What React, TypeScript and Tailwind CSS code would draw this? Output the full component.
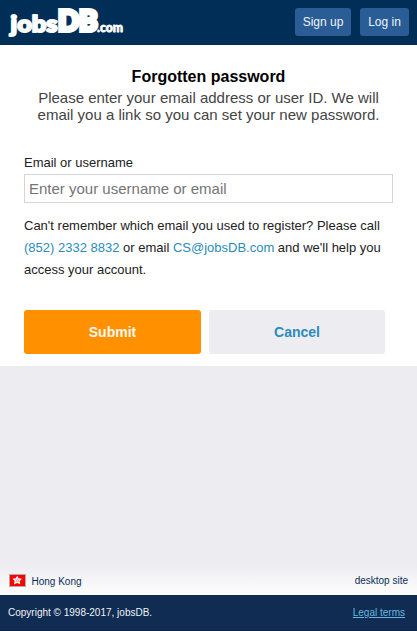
function Logo() {
  return (
    <svg width="120" height="40" viewBox="5 5 120 40" className="block overflow-visible font-[Lato,sans-serif] font-black" fill="#fff" stroke="#fff" aria-label="jobsDB.com">
      <text x="10.6" y="31.9" fontSize="23" strokeWidth="2" strokeLinejoin="round" textLength="47" lengthAdjust="spacingAndGlyphs">jobs</text>
      <text x="58" y="30.9" fontSize="27.5" strokeWidth="4" strokeLinejoin="miter" textLength="21" lengthAdjust="spacingAndGlyphs">D</text>
      <text x="79" y="30.9" fontSize="27.5" strokeWidth="4" strokeLinejoin="miter" textLength="18.5" lengthAdjust="spacingAndGlyphs">B</text>
      <text x="97" y="32.2" fontSize="13" strokeWidth="0.8" strokeLinejoin="round" textLength="26" lengthAdjust="spacingAndGlyphs">.com</text>
    </svg>
  );
}

function Flag() {
  return (
    <svg width="17" height="13" viewBox="0 0 17 13" className="block" aria-label="Hong Kong flag">
      <rect x="0.5" y="0.5" width="16" height="12" fill="#f00" stroke="#b2aaa9" />
      <path d="M8.2 1.8 9.6 4.3 12.9 4.8 10.6 7.2 11.3 10.3 8.3 8.9 5 10.3 5.6 7.1 3.5 4.8 6.8 4.3Z" fill="#fff" />
      <path d="M8.2 4.5v1.6M6.3 5.7l1.2.8M10.1 5.7l-1.2.8M7 8l.6-1M9.3 8l-.6-1" stroke="#f00" strokeWidth=".5" />
    </svg>
  );
}

export default function App() {
  return (
    <div className="flex h-[631px] w-full flex-col bg-[#edecf1] font-['Liberation_Sans',Arial,sans-serif]">
      <header className="flex h-[45px] shrink-0 items-start justify-between bg-[#002e56] pt-[5px] pr-2 pl-[5px]">
        <Logo />
        <nav className="mt-[3px] flex gap-[9px] text-xs leading-[28px] text-[#eef4fa]">
          <a className="h-7 w-14 rounded-[3px] bg-[#2a5d96] text-center">Sign up</a>
          <a className="h-7 w-[49px] rounded-[3px] bg-[#2a5d96] text-center">Log in</a>
        </nav>
      </header>

      <main className="h-[321px] shrink-0 bg-white px-6 pt-[22px]">
        <h1 className="text-center text-base leading-5 font-bold text-black">Forgotten password</h1>
        <p className="mt-[2px] text-center text-[15px] leading-[17px] text-[#444]">
          Please enter your email address or user ID. We will<br />email you a link so you can set your new password.
        </p>
        <label htmlFor="username" className="mt-[30px] block text-[13px] leading-5 text-[#222]">Email or username</label>
        <input
          id="username"
          placeholder="Enter your username or email"
          className="mt-px block h-[29px] w-[369px] border border-[#d3d6d5] bg-white px-1 text-[15px] text-[#333] outline-none placeholder:text-[#757575]"
        />
        <p className="mt-3 text-[13px] leading-[22px] text-[#222]">
          Can't remember which email you used to register? Please call<br />
          <a className="text-[#2b8cba]">(852) 2332 8832</a> or email <a className="text-[#2b8cba]">CS@jobsDB.com</a> and we'll help you<br />
          access your account.
        </p>
        <div className="mt-[29px] flex gap-2 text-sm font-bold">
          <button className="h-11 w-[177px] rounded-[3px] bg-[#ff9100] text-[#fff8ee]">Submit</button>
          <button className="h-11 w-44 rounded-[3px] bg-[#edecf1] text-[#2b8cba]">Cancel</button>
        </div>
      </main>

      <footer className="mt-auto text-[10px]">
        <div className="flex h-[30px] items-start justify-between bg-linear-to-b from-[#edecf1] to-[#fdfdfd] pr-[9px] pl-[9px] text-[#0b2f57]">
          <div className="flex items-start gap-[5.5px] pt-[9px]">
            <Flag />
            <span className="leading-[15px]">Hong Kong</span>
          </div>
          <a className="pt-2 leading-[15px]">desktop site</a>
        </div>
        <div className="flex h-9 items-center justify-between border-b border-[#092345] bg-[#102c53] pr-3 pl-2 text-[#eef1f5]">
          <span>Copyright © 1998-2017, jobsDB.</span>
          <a className="text-[#66b5dd] underline">Legal terms</a>
        </div>
      </footer>
    </div>
  );
}
